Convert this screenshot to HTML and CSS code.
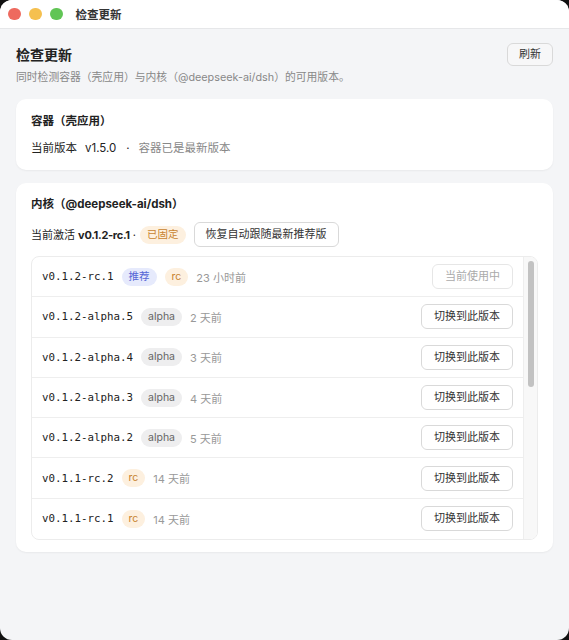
FILE: index.html
```html
<!DOCTYPE html>
<html lang="zh-CN">
<head>
    <meta charset="UTF-8">
    <meta name="viewport" content="width=device-width, initial-scale=1.0">
    <title>检查更新</title>
    <link rel="stylesheet" href="styles.css">
</head>
<body>
    <div class="window">
        <div class="titlebar">
            <div class="lights">
                <span class="light red"></span>
                <span class="light yellow"></span>
                <span class="light green"></span>
            </div>
            <span class="window-title">检查更新</span>
        </div>
        <main class="content">
            <header class="page-head">
                <div>
                    <h1>检查更新</h1>
                    <p class="sub">同时检测容器（壳应用）与内核（@deepseek-ai/dsh）的可用版本。</p>
                </div>
                <button class="btn">刷新</button>
            </header>

            <section class="card">
                <h2>容器（壳应用）</h2>
                <div class="line">
                    <span>当前版本</span>
                    <span class="ver-num">v1.5.0</span>
                    <span class="dot">·</span>
                    <span class="muted">容器已是最新版本</span>
                </div>
            </section>

            <section class="card kernel">
                <h2>内核（@deepseek-ai/dsh）</h2>
                <div class="line active-line">
                    <span>当前激活 <b>v0.1.2-rc.1</b> ·</span>
                    <span class="tag tag-rc">已固定</span>
                    <button class="btn">恢复自动跟随最新推荐版</button>
                </div>
                <div class="versions">
                    <div class="rows">
                        <div class="row">
                            <span class="ver">v0.1.2-rc.1</span>
                            <span class="tag tag-rec">推荐</span>
                            <span class="tag tag-rc">rc</span>
                            <span class="ago">23 小时前</span>
                            <button class="btn disabled" disabled>当前使用中</button>
                        </div>
                        <div class="row">
                            <span class="ver">v0.1.2-alpha.5</span>
                            <span class="tag tag-alpha">alpha</span>
                            <span class="ago">2 天前</span>
                            <button class="btn">切换到此版本</button>
                        </div>
                        <div class="row">
                            <span class="ver">v0.1.2-alpha.4</span>
                            <span class="tag tag-alpha">alpha</span>
                            <span class="ago">3 天前</span>
                            <button class="btn">切换到此版本</button>
                        </div>
                        <div class="row">
                            <span class="ver">v0.1.2-alpha.3</span>
                            <span class="tag tag-alpha">alpha</span>
                            <span class="ago">4 天前</span>
                            <button class="btn">切换到此版本</button>
                        </div>
                        <div class="row">
                            <span class="ver">v0.1.2-alpha.2</span>
                            <span class="tag tag-alpha">alpha</span>
                            <span class="ago">5 天前</span>
                            <button class="btn">切换到此版本</button>
                        </div>
                        <div class="row">
                            <span class="ver">v0.1.1-rc.2</span>
                            <span class="tag tag-rc">rc</span>
                            <span class="ago">14 天前</span>
                            <button class="btn">切换到此版本</button>
                        </div>
                        <div class="row">
                            <span class="ver">v0.1.1-rc.1</span>
                            <span class="tag tag-rc">rc</span>
                            <span class="ago">14 天前</span>
                            <button class="btn">切换到此版本</button>
                        </div>
                    </div>
                    <div class="scrollbar"><div class="thumb"></div></div>
                </div>
            </section>
        </main>
    </div>
</body>
</html>
```

FILE: styles.css
```css
* {
    box-sizing: border-box;
}
html, body {
    margin: 0;
    padding: 0;
    background: #111;
}
body {
    font-family: "Inter", "Noto Sans CJK SC", sans-serif;
    color: #222;
    font-size: 11.5px;
}
.window {
    width: 569px;
    height: 640px;
    border-radius: 12px;
    overflow: hidden;
    background: #f4f5f7;
}
.titlebar {
    height: 29px;
    background: #fff;
    border-bottom: 1px solid #e6e7e9;
    display: flex;
    align-items: center;
    padding-left: 8px;
}
.lights {
    display: flex;
    gap: 8.5px;
}
.light {
    width: 12.5px;
    height: 12.5px;
    border-radius: 50%;
}
.red { background: #ee6a5f; }
.yellow { background: #f5c04f; }
.green { background: #61c555; }
.window-title {
    margin-left: 13px;
    font-size: 11.5px;
    font-weight: 600;
    color: #333;
}
.content {
    padding: 16px 16px 0;
}
.page-head {
    display: flex;
    justify-content: space-between;
    align-items: flex-start;
}
h1 {
    margin: 0;
    font-size: 14px;
    line-height: 20px;
    font-weight: 700;
}
.sub {
    margin: 5px 0 0;
    font-size: 10.8px;
    line-height: 16px;
    color: #888;
}
.btn {
    font-family: inherit;
    font-size: 11px;
    line-height: 15px;
    height: 25px;
    padding: 0 12px;
    background: #fff;
    border: 1px solid #d9d9d9;
    border-radius: 6px;
    color: #333;
    cursor: pointer;
}
.page-head .btn {
    height: 23px;
    padding: 0 11px;
    margin-top: -2px;
    background: #f7f7f8;
}
.btn.disabled {
    color: #aaa;
    border-color: #e6e6e6;
    cursor: default;
}
.card {
    background: #fff;
    border-radius: 10px;
    padding: 13px 15px;
    margin-top: 13px;
    box-shadow: 0 1px 2px rgba(0, 0, 0, 0.05);
}
.card h2 {
    margin: 0;
    font-size: 11.5px;
    line-height: 18px;
    font-weight: 700;
}
.line {
    display: flex;
    align-items: center;
    margin-top: 9px;
    line-height: 18px;
}
.ver-num {
    margin-left: 8px;
}
.dot {
    margin: 0 9px 0 10px;
}
.muted {
    color: #888;
}
.kernel {
    padding: 12px 15px 12px;
}
.active-line {
    margin-top: 9px;
    gap: 4px;
    font-size: 11px;
}
.active-line b {
    font-weight: 700;
    letter-spacing: -0.3px;
}
.active-line .btn {
    margin-left: 4px;
    padding: 0 11px;
}
.tag {
    display: inline-block;
    font-size: 10.5px;
    line-height: 18px;
    height: 18px;
    padding: 0 7px;
    border-radius: 9px;
}
.tag-rec {
    background: #e6eafc;
    color: #5566d6;
}
.tag-rc {
    background: #fdf0df;
    color: #c8832f;
}
.tag-alpha {
    background: #eeeeef;
    color: #666;
}
.versions {
    display: flex;
    margin-top: 9px;
    height: 284px;
    overflow: hidden;
    border: 1px solid #ececec;
    border-radius: 8px;
}
.rows {
    flex: 1;
}
.scrollbar {
    width: 14px;
    background: #f8f8f8;
    border-left: 1px solid #eeeeee;
    padding: 4px 3px 0 3.5px;
}
.thumb {
    height: 126px;
    border-radius: 4px;
    background: #c2c2c2;
}
.row {
    display: flex;
    align-items: center;
    gap: 8px;
    height: 40.3px;
    padding: 0 10px;
    border-bottom: 1px solid #eeeeee;
}
.row:last-child {
    border-bottom: none;
}
.ver {
    font-family: "DejaVu Sans Mono", monospace;
    font-size: 10.8px;
    color: #222;
}
.ago {
    font-size: 11px;
    color: #999;
}
.row .btn {
    margin-left: auto;
}
```
